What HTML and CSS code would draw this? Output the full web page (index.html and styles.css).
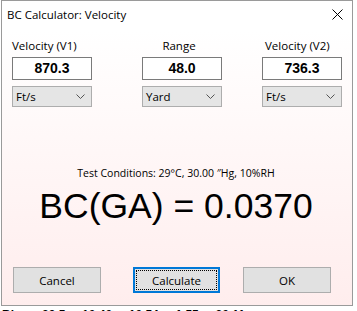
FILE: index.html
```html
<!DOCTYPE html>
<html>
<head>
<meta charset="utf-8">
<link rel="stylesheet" href="styles.css">
</head>
<body>
<div class="window">
  <div class="titlebar">
    <span class="title">BC Calculator: Velocity</span>
    <svg class="close" width="11" height="11" viewBox="0 0 11 11"><path d="M0.5 0.5 L10.5 10.5 M10.5 0.5 L0.5 10.5" stroke="#000" stroke-width="1" fill="none"/></svg>
  </div>
  <div class="client">
    <div class="fields">
      <div class="col col-v1">
        <div class="label">Velocity (V1)</div>
        <div class="input">870.3</div>
        <div class="select"><span>Ft/s</span><svg class="chev" width="9" height="5" viewBox="0 0 9 5"><path d="M0.5 0.5 L4.5 4.5 L8.5 0.5" stroke="#555" fill="none"/></svg></div>
      </div>
      <div class="col col-range">
        <div class="label">Range</div>
        <div class="input">48.0</div>
        <div class="select"><span>Yard</span><svg class="chev" width="9" height="5" viewBox="0 0 9 5"><path d="M0.5 0.5 L4.5 4.5 L8.5 0.5" stroke="#555" fill="none"/></svg></div>
      </div>
      <div class="col col-v2">
        <div class="label">Velocity (V2)</div>
        <div class="input">736.3</div>
        <div class="select"><span>Ft/s</span><svg class="chev" width="9" height="5" viewBox="0 0 9 5"><path d="M0.5 0.5 L4.5 4.5 L8.5 0.5" stroke="#555" fill="none"/></svg></div>
      </div>
    </div>
    <div class="conditions">Test Conditions: 29°C, 30.00 ″Hg, 10%RH</div>
    <div class="result">BC(GA) = 0.0370</div>
    <div class="buttons">
      <div class="btn btn-cancel">Cancel</div>
      <div class="btn btn-calc"><span class="focus">Calculate</span></div>
      <div class="btn btn-ok">OK</div>
    </div>
  </div>
</div>
<div class="under">Bluem 29.5 ... 10.40 ... 10.54 ... 1.55 ... 20.11</div>
</body>
</html>
```
FILE: styles.css
```css
html, body {
  margin: 0;
  padding: 0;
}
body {
  width: 357px;
  height: 311px;
  overflow: hidden;
  background: #fff;
  font-family: "Open Sans", "Noto Sans", sans-serif;
  color: #000;
}
.window {
  margin-left: 1px;
  width: 352px;
  height: 306px;
  box-sizing: border-box;
  border: 1px solid #9a9a9a;
  display: flex;
  flex-direction: column;
  background: #fff;
}
.titlebar {
  height: 29px;
  flex: none;
  display: flex;
  align-items: center;
  justify-content: space-between;
  padding: 0 9px 0 5px;
  background: #fff;
}
.title {
  font-size: 11.5px;
  margin-top: -2px;
}
.close {
  display: block;
  margin-top: -2px;
}
.client {
  flex: 1;
  background: linear-gradient(#ffffff, #ffeded);
  display: flex;
  flex-direction: column;
  padding-top: 8px;
}
.fields {
  display: flex;
  padding-left: 10px;
}
.col {
  width: 80px;
  display: flex;
  flex-direction: column;
}
.col-range { margin-left: 50px; }
.col-v2 { margin-left: 40px; }
.label {
  font-size: 11.5px;
  height: 19px;
  line-height: 16px;
}
.col-v1 .label { text-align: left; }
.col-range .label { text-align: center; padding-right: 6px; }
.col-v2 .label { text-align: left; padding-left: 3px; }
.input {
  height: 23px;
  box-sizing: border-box;
  border: 1px solid #7a7a7a;
  background: #fff;
  font-family: "Liberation Sans", Arial, sans-serif;
  font-weight: bold;
  font-size: 14px;
  line-height: 21px;
  text-align: center;
}
.select {
  margin-top: 6px;
  height: 21px;
  box-sizing: border-box;
  border: 1px solid #adadad;
  background: #e5e5e5;
  display: flex;
  align-items: center;
  justify-content: space-between;
  padding: 0 6px 0 3px;
  font-size: 11.5px;
}
.chev { display: block; }
.conditions {
  margin-top: 59px;
  text-align: center;
  font-size: 10.5px;
  line-height: 14px;
  padding-right: 2px;
}
.result {
  margin-top: 6px;
  text-align: center;
  font-family: "Liberation Sans", Arial, sans-serif;
  font-size: 35.5px;
  line-height: 40px;
  padding-right: 2px;
}
.buttons {
  margin-top: 41px;
  display: flex;
  padding-left: 11px;
}
.btn {
  height: 26px;
  box-sizing: border-box;
  border: 1px solid #adadad;
  background: #e1e1e1;
  font-size: 11.5px;
  display: flex;
  align-items: center;
  justify-content: center;
}
.btn-cancel { width: 88px; }
.btn-calc {
  width: 87px;
  margin-left: 32px;
  border: 2px solid #0078d7;
  padding: 1px;
}
.btn-calc .focus {
  flex: 1;
  align-self: stretch;
  display: flex;
  align-items: center;
  justify-content: center;
  border: 1px dotted #000;
}
.btn-ok { width: 88px; margin-left: 23px; }
.under {
  margin-top: 2px;
  padding-left: 2px;
  font-family: "Liberation Sans", Arial, sans-serif;
  font-weight: bold;
  font-size: 12px;
  line-height: 14px;
  white-space: nowrap;
}
```
